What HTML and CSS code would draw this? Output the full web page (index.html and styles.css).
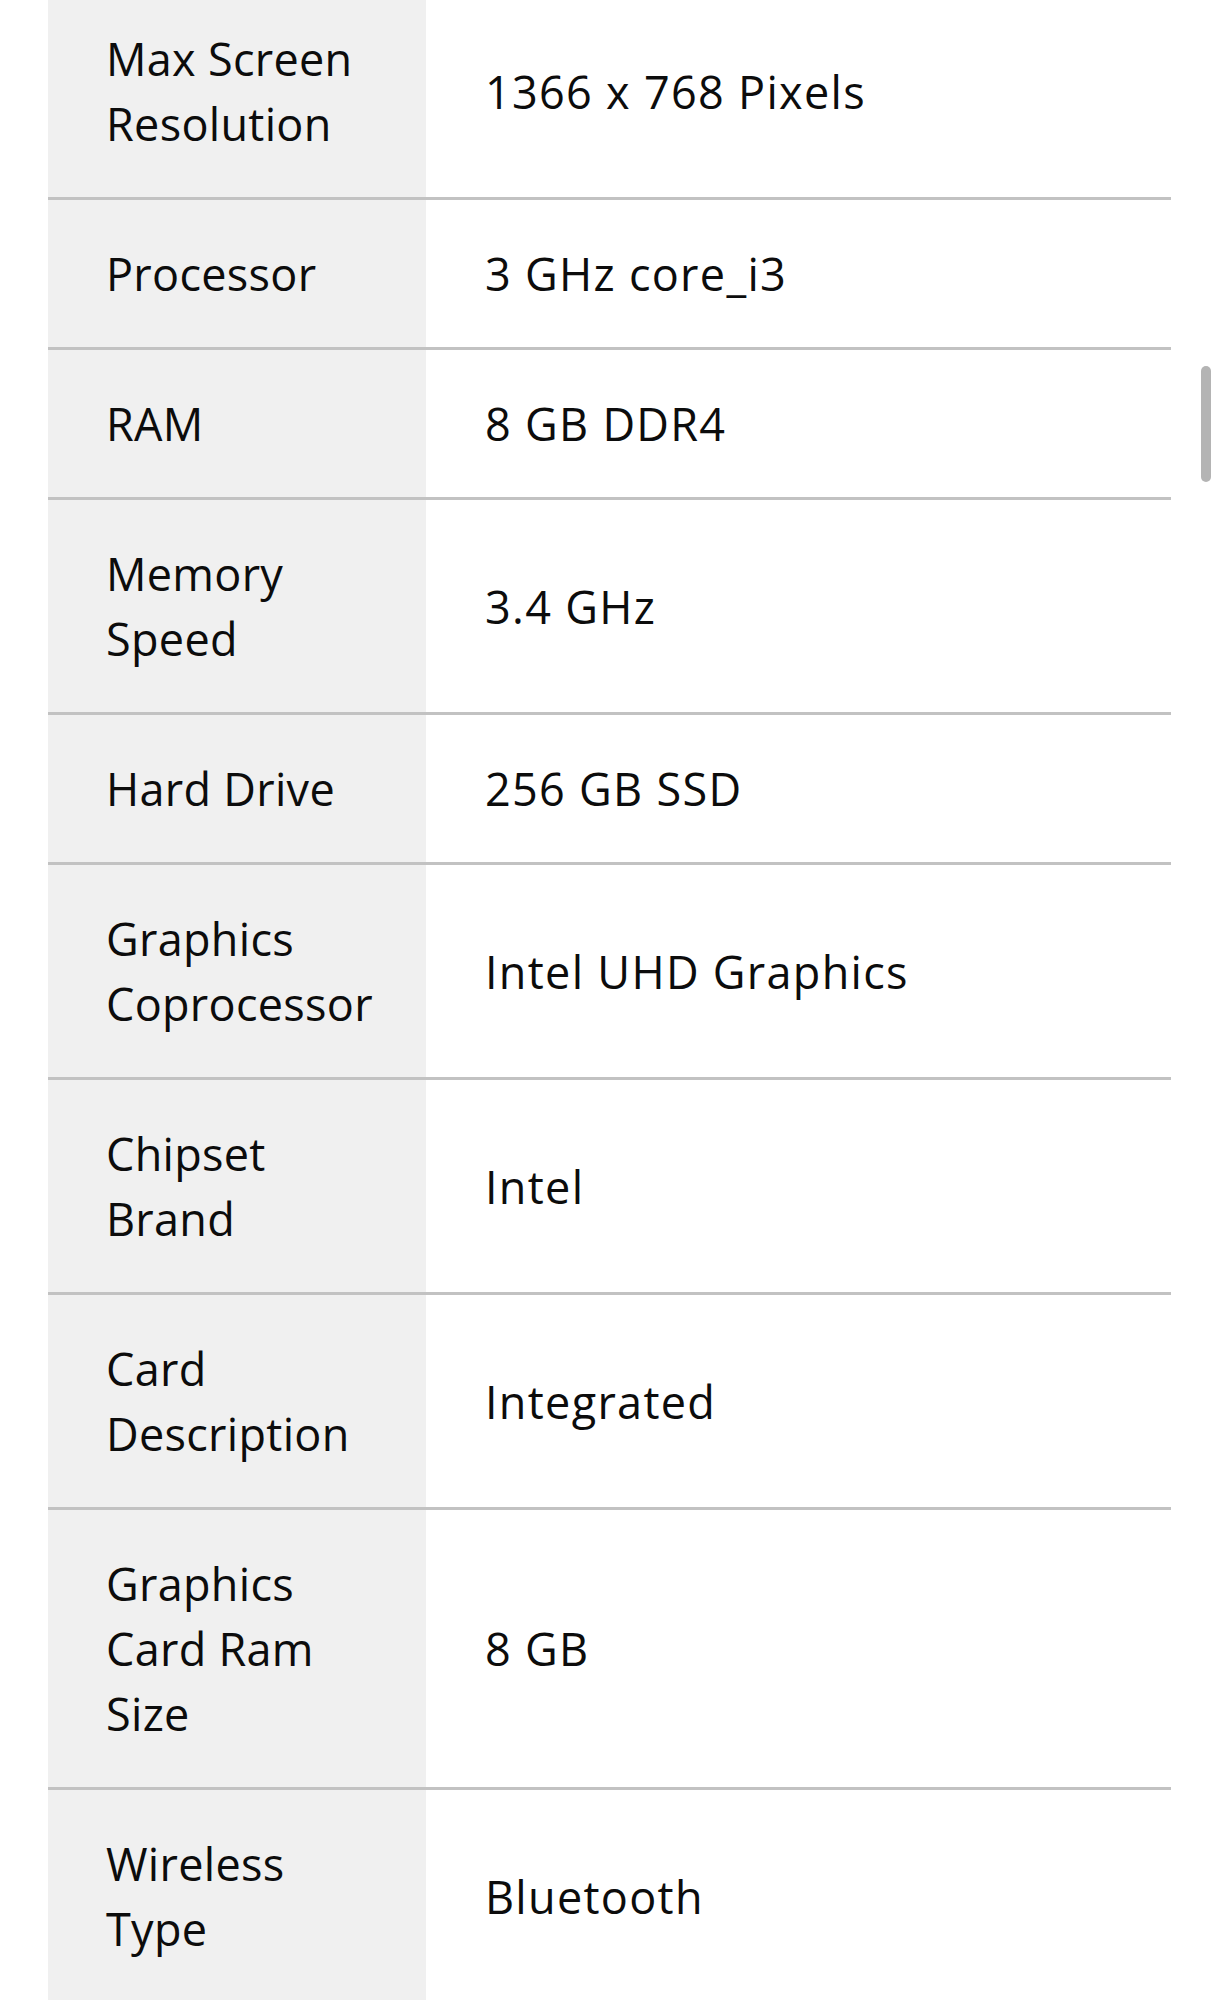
FILE: index.html
```html
<!DOCTYPE html>
<html lang="en">
<head>
<meta charset="utf-8">
<title>Technical Details</title>
<link rel="stylesheet" href="styles.css">
</head>
<body>
<div class="viewport">
  <div class="specs">
    <div class="row"><div class="label">Max Screen Resolution</div><div class="value">1366 x 768 Pixels</div></div>
    <div class="row"><div class="label">Processor</div><div class="value">3 GHz core_i3</div></div>
    <div class="row"><div class="label">RAM</div><div class="value">8 GB DDR4</div></div>
    <div class="row"><div class="label">Memory Speed</div><div class="value">3.4 GHz</div></div>
    <div class="row"><div class="label">Hard Drive</div><div class="value">256 GB SSD</div></div>
    <div class="row"><div class="label">Graphics Coprocessor</div><div class="value">Intel UHD Graphics</div></div>
    <div class="row"><div class="label">Chipset Brand</div><div class="value">Intel</div></div>
    <div class="row"><div class="label">Card Description</div><div class="value">Integrated</div></div>
    <div class="row"><div class="label">Graphics Card Ram Size</div><div class="value">8 GB</div></div>
    <div class="row"><div class="label">Wireless Type</div><div class="value">Bluetooth</div></div>
  </div>
  <div class="scrollbar"></div>
</div>
</body>
</html>
```
FILE: styles.css
```css
html, body {
  margin: 0;
  padding: 0;
  background: #ffffff;
}
body {
  font-family: "Open Sans", "Noto Sans", sans-serif;
  color: #0c0c0c;
  overflow: hidden;
  height: 2000px;
}
.viewport {
  position: relative;
  height: 2000px;
  overflow: hidden;
}
.specs {
  margin: -15px 0 0 48px;
  width: 1123px;
}
.row {
  display: grid;
  grid-template-columns: 378px 1fr;
  border-bottom: 3px solid #c2c2c2;
}
.label,
.value {
  display: flex;
  align-items: center;
  padding: 41px 0;
  font-size: 45px;
  line-height: 65px;
}
.label {
  background: #f0f0f0;
  padding-left: 58px;
  padding-right: 45px;
  letter-spacing: 0.3px;
}
.value {
  padding-left: 59px;
  padding-right: 20px;
  letter-spacing: 1.3px;
}
.scrollbar {
  position: absolute;
  top: 366px;
  left: 1201px;
  width: 10px;
  height: 116px;
  border-radius: 5px;
  background: #b4b4b4;
}
```
